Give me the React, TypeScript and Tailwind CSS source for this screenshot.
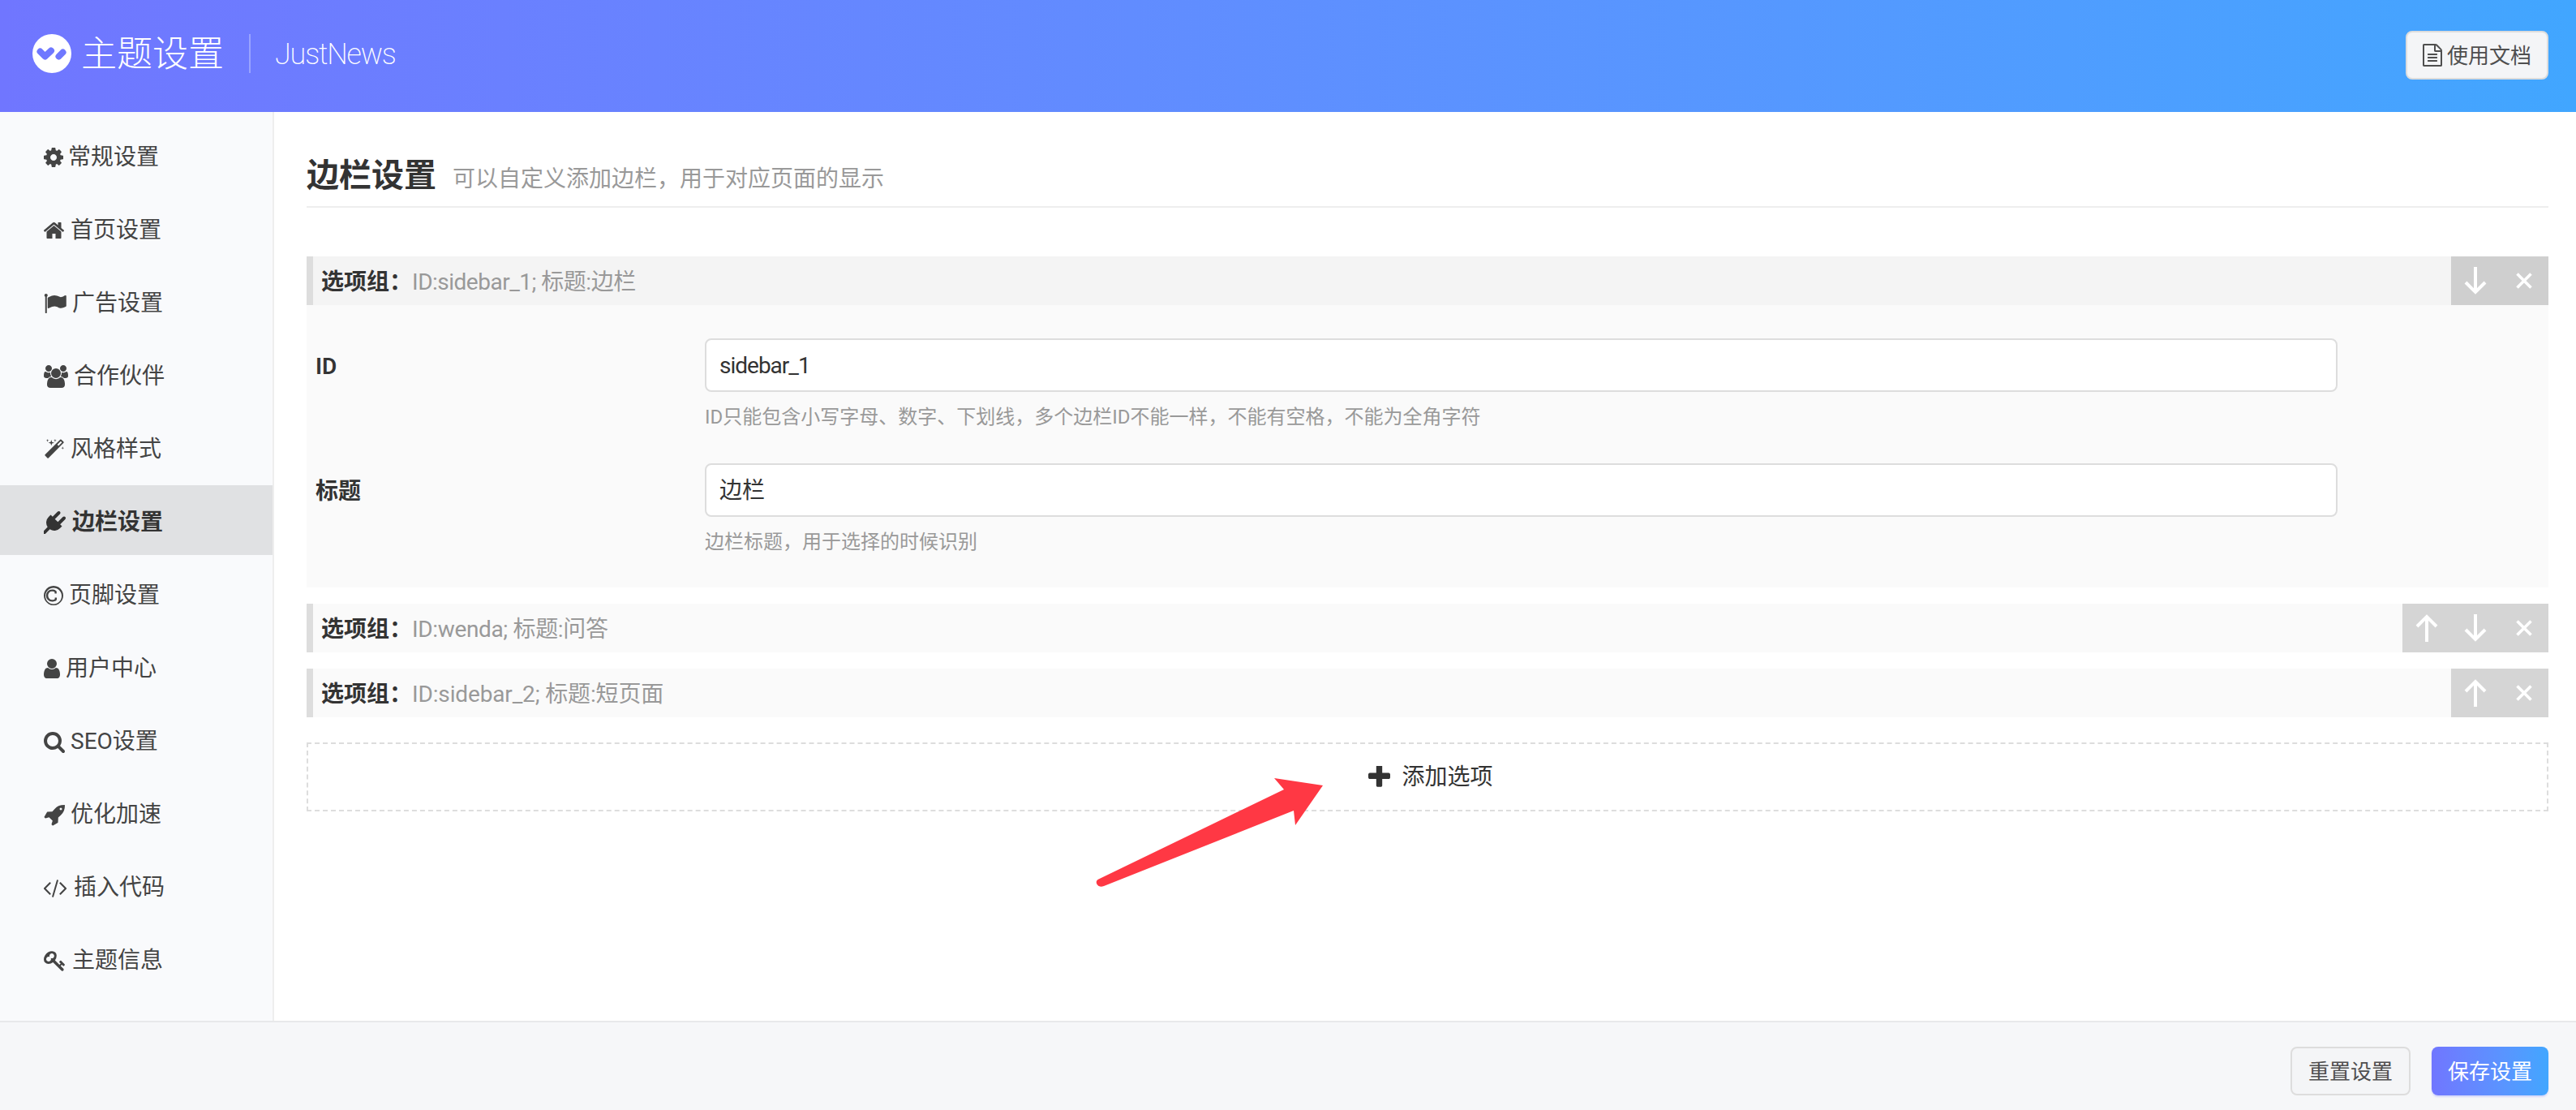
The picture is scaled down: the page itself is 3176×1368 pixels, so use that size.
import React from "react";

const FONT = "font-['Roboto','Noto_Sans_CJK_SC',sans-serif]";

type Item = { label: string; vb: string; w: string; slot: string; d: string };

const cog = "M1152 896q0-106-75-181t-181-75-181 75-75 181 75 181 181 75 181-75 75-181zm512-109v222q0 12-8 23t-20 13l-185 28q-19 54-39 91 35 50 107 138 10 12 10 25t-9 23q-27 37-99 108t-94 71q-12 0-26-9l-138-108q-44 23-91 38-16 136-29 186-7 28-36 28h-222q-14 0-24.5-8.5t-11.5-21.5l-28-184q-49-16-90-37l-141 107q-10 9-25 9-14 0-25-11-126-114-165-168-7-10-7-23 0-12 8-23 15-21 51-66.5t54-70.5q-27-50-41-99l-183-27q-13-2-21-12.5t-8-23.5v-222q0-12 8-23t19-13l186-28q14-46 39-92-40-57-107-138-10-12-10-24 0-10 9-23 26-36 98.5-107.5t94.5-71.5q13 0 26 10l138 107q44-23 91-38 16-136 29-186 7-28 36-28h222q14 0 24.5 8.5t11.5 21.5l28 184q49 16 90 37l142-107q9-9 24-9 13 0 25 10 129 119 165 170 7 8 7 22 0 12-8 23-15 21-51 66.5t-54 70.5q26 50 41 98l183 28q13 2 21 12.5t8 23.5z";
const home = "M1472 992v480q0 26-19 45t-45 19h-384v-384h-256v384h-384q-26 0-45-19t-19-45v-480q0-1 .5-3t.5-3l575-474 575 474q1 2 1 6zm223-69l-62 74q-8 9-21 11h-3q-13 0-21-7l-692-577-692 577q-12 8-24 7-13-2-21-11l-62-74q-8-10-7-23.5t11-21.5l719-599q32-26 76-26t76 26l244 204v-195q0-14 9-23t23-9h192q14 0 23 9t9 23v408l219 182q10 8 11 21.5t-7 23.5z";
const flag = "M320 256q0 72-64 110v1266q0 13-9.5 22.5t-22.5 9.5h-64q-13 0-22.5-9.5t-9.5-22.5v-1266q-64-38-64-110 0-53 37.5-90.5t90.5-37.5 90.5 37.5 37.5 90.5zm1472 64v763q0 25-12.5 38.5t-39.5 27.5q-215 116-369 116-61 0-123.5-22t-108.5-48-115.5-48-142.5-22q-192 0-464 146-17 9-33 9-26 0-45-19t-19-45v-742q0-32 31-55 21-14 79-43 236-120 421-120 107 0 200 29t219 88q38 19 88 19 54 0 117.5-21t110-47 88-47 54.5-21q26 0 45 19t19 45z";
const users = "M593 896q-162 5-265 128h-134q-82 0-138-40.5t-56-118.5q0-353 124-353 6 0 43.5 21t97.5 42.5 119 21.5q67 0 133-23-5 37-5 66 0 139 81 256zm1071 637q0 120-73 189.5t-194 69.5h-874q-121 0-194-69.5t-73-189.5q0-53 3.5-103.5t14-109 26.5-108.5 43-97.5 62-81 85.5-53.5 111.5-20q10 0 43 21.5t73 48 107 48 135 21.5 135-21.5 107-48 73-48 43-21.5q61 0 111.5 20t85.5 53.5 62 81 43 97.5 26.5 108.5 14 109 3.5 103.5zm-1024-1277q0 106-75 181t-181 75-181-75-75-181 75-181 181-75 181 75 75 181zm704 384q0 159-112.5 271.5t-271.5 112.5-271.5-112.5-112.5-271.5 112.5-271.5 271.5-112.5 271.5 112.5 112.5 271.5zm576 225q0 78-56 118.5t-138 40.5h-134q-103-123-265-128 81-117 81-256 0-29-5-66 66 23 133 23 59 0 119-21.5t97.5-42.5 43.5-21q124 0 124 353zm-128-609q0 106-75 181t-181 75-181-75-75-181 75-181 181-75 181 75 75 181z";
const magic = "M1254 581l293-293-107-107-293 293zm447-293q0 27-18 45l-1286 1286q-18 18-45 18t-45-18l-198-198q-18-18-18-45t18-45l1286-1286q18-18 45-18t45 18l198 198q18 18 18 45zm-1351-190l98 30-98 30-30 98-30-98-98-30 98-30 30-98zm350 162l196 60-196 60-60 196-60-196-196-60 196-60 60-196zm930 478l98 30-98 30-30 98-30-98-98-30 98-30 30-98zm-640-640l98 30-98 30-30 98-30-98-98-30 98-30 30-98z";
const plug = "M1755 453q37 38 37 90.5t-37 90.5l-401 400 150 150-160 160q-163 163-389.5 186.5t-411.5-100.5l-362 362h-181v-181l362-362q-124-185-100.5-411.5t186.5-389.5l160-160 150 150 400-401q38-37 91-37t90 37 37 90.5-37 90.5l-400 401 234 234 401-400q38-37 91-37t90 37z";
const copyright = "M1150 1074v109q0 50-36.5 89t-94 60.5-118 32.5-117.5 11q-205 0-342.5-139t-137.5-346q0-203 136-339t339-136q34 0 75.5 4.5t93 18 92.5 34 69 56.5 28 81v109q0 16-16 16h-118q-16 0-16-16v-70q0-43-65.5-67.5t-137.5-24.5q-140 0-228.5 91.5t-88.5 237.5q0 151 91.5 249.5t233.5 98.5q68 0 138-24t70-66v-70q0-7 4.5-11.5t10.5-4.5h119q6 0 11 4.5t5 11.5zm-254-786q-130 0-248.5 51t-204 136.5-136.5 204-51 248.5 51 248.5 136.5 204 204 136.5 248.5 51 248.5-51 204-136.5 136.5-204 51-248.5-51-248.5-136.5-204-204-136.5-248.5-51zm768 608q0 209-103 385.5t-279.5 279.5-385.5 103-385.5-103-279.5-279.5-103-385.5 103-385.5 279.5-279.5 385.5-103 385.5 103 279.5 279.5 103 385.5z";
const user = "M1536 1399q0 109-62.5 187t-150.5 78h-854q-88 0-150.5-78t-62.5-187q0-85 8.5-160.5t31.5-152 58.5-131 94-89 134.5-34.5q131 128 313 128t313-128q76 0 134.5 34.5t94 89 58.5 131 31.5 152 8.5 160.5zm-256-887q0 159-112.5 271.5t-271.5 112.5-271.5-112.5-112.5-271.5 112.5-271.5 271.5-112.5 271.5 112.5 112.5 271.5z";
const search = "M1216 832q0-185-131.5-316.5t-316.5-131.5-316.5 131.5-131.5 316.5 131.5 316.5 316.5 131.5 316.5-131.5 131.5-316.5zm512 832q0 52-38 90t-90 38q-54 0-90-38l-343-342q-179 124-399 124-143 0-273.5-55.5t-225-150-150-225-55.5-273.5 55.5-273.5 150-225 225-150 273.5-55.5 273.5 55.5 225 150 150 225 55.5 273.5q0 220-124 399l343 343q37 37 37 90z";
const rocket = "M1504 448q0-40-28-68t-68-28-68 28-28 68 28 68 68 28 68-28 28-68zm224-288q0 249-75.5 430.5t-253.5 360.5q-81 80-195 176l-20 379q-2 16-16 26l-384 224q-7 4-16 4-12 0-23-9l-64-64q-13-14-8-32l85-276-281-281-276 85q-3 1-9 1-14 0-23-9l-64-64q-17-19-5-39l224-384q10-14 26-16l379-20q96-114 176-195 188-187 358-258t431-71q14 0 24 9.5t10 22.5z";
const code = "M553 1399l-50 50q-10 10-23 10t-23-10l-466-466q-10-10-10-23t10-23l466-466q10-10 23-10t23 10l50 50q10 10 10 23t-10 23l-393 393 393 393q10 10 10 23t-10 23zm591-1067l-373 1291q-4 13-15.5 19.5t-23.5 2.5l-62-17q-13-4-19.5-15.5t-2.5-24.5l373-1291q4-13 15.5-19.5t23.5-2.5l62 17q13 4 19.5 15.5t2.5 24.5zm657 651l-466 466q-10 10-23 10t-23-10l-50-50q-10-10-10-23t10-23l393-393-393-393q-10-10-10-23t10-23l50-50q10-10 23-10t23 10l466 466q10 10 10 23t-10 23z";
const key = "M832 512q0-80-56-136t-136-56-136 56-56 136q0 42 19 83-41-19-83-19-80 0-136 56t-56 136 56 136 136 56 136-56 56-136q0-42-19-83 41 19 83 19 80 0 136-56t56-136zm851 704q0 17-49 66t-66 49q-9 0-28.5-16t-36.5-33-38.5-40-24.5-26l-96 96 220 220q28 28 28 68 0 42-39 81t-81 39q-40 0-68-28l-671-671q-176 131-365 131-163 0-265.5-102.5t-102.5-265.5q0-160 95-313t248-248 313-95q163 0 265.5 102.5t102.5 265.5q0 189-131 365l355 355 96-96q-3-3-26-24.5t-40-38.5-33-36.5-16-28.5q0-17 49-66t66-49q13 0 23 10 6 6 46 44.5t82 79.5 86.5 86 73 78 28.5 41z";
const fileText = "M1596 380q28 28 48 76t20 88v1152q0 40-28 68t-68 28h-1344q-40 0-68-28t-28-68v-1600q0-40 28-68t68-28h896q40 0 88 20t76 48zm-444-244v376h376q-10-29-22-41l-313-313q-12-12-41-22zm384 1528v-1024h-416q-40 0-68-28t-28-68v-416h-768v1536h1280zm-1024-864q0-14 9-23t23-9h704q14 0 23 9t9 23v64q0 14-9 23t-23 9h-704q-14 0-23-9t-9-23v-64zm736 224q14 0 23 9t9 23v64q0 14-9 23t-23 9h-704q-14 0-23-9t-9-23v-64q0-14 9-23t23-9h704zm0 256q14 0 23 9t9 23v64q0 14-9 23t-23 9h-704q-14 0-23-9t-9-23v-64q0-14 9-23t23-9h704z";
const plus = "M1600 736v192q0 40-28 68t-68 28h-416v416q0 40-28 68t-68 28h-192q-40 0-68-28t-28-68v-416h-416q-40 0-68-28t-28-68v-192q0-40 28-68t68-28h416v-416q0-40 28-68t68-28h192q40 0 68 28t28 68v416h416q40 0 68 28t28 68z";

const items: Item[] = [
  { label: "常规设置", vb: "128 0 1536 1792", w: "w-[24px]", slot: "w-[30px]", d: cog },
  { label: "首页设置", vb: "97 0 1600 1792", w: "w-[25px]", slot: "w-[33px]", d: home },
  { label: "广告设置", vb: "32 0 1760 1792", w: "w-[28px]", slot: "w-[35px]", d: flag },
  { label: "合作伙伴", vb: "0 0 1920 1792", w: "w-[30px]", slot: "w-[37px]", d: users },
  { label: "风格样式", vb: "0 0 1792 1792", w: "w-[26px]", slot: "w-[33px]", d: magic },
  { label: "边栏设置", vb: "64 0 1728 1792", w: "w-[27px]", slot: "w-[35px]", d: plug },
  { label: "页脚设置", vb: "128 0 1536 1792", w: "w-[24px]", slot: "w-[31px]", d: copyright },
  { label: "用户中心", vb: "256 0 1280 1792", w: "w-[20px]", slot: "w-[27px]", d: user },
  { label: "SEO设置", vb: "64 0 1664 1792", w: "w-[26px]", slot: "w-[33px]", d: search },
  { label: "优化加速", vb: "64 0 1664 1792", w: "w-[26px]", slot: "w-[33px]", d: rocket },
  { label: "插入代码", vb: "0 0 1792 1792", w: "w-[28px]", slot: "w-[37px]", d: code },
  { label: "主题信息", vb: "0 0 1683 1792", w: "w-[26px]", slot: "w-[35px]", d: key },
];

function Arrow({ up }: { up?: boolean }) {
  return (
    <svg viewBox="0 0 28 34" className="w-[28px] h-[34px]" fill="none" stroke="#fff" strokeWidth="4">
      {up ? <path d="M14 34V3M2 15L14 3l12 12" /> : <path d="M14 0v31M2 19l12 12 12-12" />}
    </svg>
  );
}

function Close() {
  return (
    <svg viewBox="0 0 20 20" className="w-[20px] h-[20px]" fill="none" stroke="#fff" strokeWidth="3.6">
      <path d="M1.500 1.500l17 17M18.500 1.500l-17 17" />
    </svg>
  );
}

function ActionButton({ children }: { children: React.ReactNode }) {
  return <div className="w-[60px] h-[60px] flex items-center justify-center">{children}</div>;
}

function GroupHeader({ text, track, up, down, open }: { text: string; track: string; up?: boolean; down?: boolean; open?: boolean }) {
  return (
    <div className={`h-[60px] flex items-center border-l-[8px] border-[#dddddd] ${open ? "bg-[#f4f4f4]" : "bg-[#fafafa]"}`}>
      <span className="ml-[10px] pt-[4px] font-semibold text-[#333]">选项组：</span>
      <span className={`flex-1 pt-[4px] text-[#999] ${track}`}>{text}</span>
      <div className={`flex ${open ? "bg-[#cfcfcf]" : "bg-[#d5d5d5]"}`}>
        {up && <ActionButton><Arrow up /></ActionButton>}
        {down && <ActionButton><Arrow /></ActionButton>}
        <ActionButton><Close /></ActionButton>
      </div>
    </div>
  );
}

function Field({ label, value, help, latin }: { label: string; value: string; help: string; latin?: boolean }) {
  return (
    <div className="flex h-[154px]">
      <div className="w-[491px] pl-[11px] pt-[10px] leading-[50px] font-semibold text-[#333]">{label}</div>
      <div className="w-[2013px]">
        <div className={`h-[66px] rounded-[8px] border-2 border-[#dddddd] bg-white pl-[16px] pt-[2px] leading-[60px] text-[#333] ${latin ? "tracking-[-1px]" : ""}`}>{value}</div>
        <div className="mt-[15px] text-[24px] leading-[32px] text-[#999]">{help}</div>
      </div>
    </div>
  );
}

export default function App() {
  return (
    <div className={`relative w-[3176px] h-[1368px] overflow-hidden bg-white text-[28px] text-[#444] ${FONT}`}>
      <header className="h-[138px] flex items-center justify-between pl-[40px] pr-[34px] bg-gradient-to-r from-[#7076ff] to-[#41a6ff]">
        <div className="flex items-center text-white mb-[6px]">
          <svg viewBox="0 0 48 48" className="w-[48px] h-[48px]">
            <circle cx="24" cy="24" r="24" fill="#fff" />
            <path d="M9.500 21.500L15.500 27.500L23 20.500" fill="none" stroke="#6f78ff" strokeWidth="8" strokeLinecap="round" strokeLinejoin="round" />
            <path d="M32.500 27.500L37.500 22.500" fill="none" stroke="#6f78ff" strokeWidth="8" strokeLinecap="round" />
          </svg>
          <span className="ml-[12px] pt-[2px] text-[44px] leading-[60px] font-light">主题设置</span>
          <span className="ml-[31px] h-[48px] w-[2px] bg-white/30" />
          <span className="ml-[30px] pt-[2px] text-[36px] leading-[60px] font-extralight tracking-[-1.2px] font-['Roboto']">JustNews</span>
        </div>
        <div className="w-[176px] h-[60px] mb-[2px] flex items-center pl-[19px] rounded-[8px] border-2 border-[#dddddd] bg-[#f4f5f7] text-[26px] text-[#4f4f4f]">
          <svg viewBox="128 0 1536 1792" className="w-[24px] h-[28px] fill-current">
            <path d={fileText} />
          </svg>
          <span className="ml-[6px] pt-[2px]">使用文档</span>
        </div>
      </header>

      <div className="flex h-[1120px]">
        <aside className="w-[338px] border-r-2 border-[#eeeeee] bg-[#f9fafc] pt-[10px] flex flex-col gap-[4px]">
          {items.map((it) => {
            const active = it.label === "边栏设置";
            return (
              <div key={it.label} className={`h-[86px] pt-[5px] flex items-center pl-[54px] ${active ? "bg-[#e0e1e3] font-semibold text-[#333]" : ""}`}>
                <span className={`${it.slot} flex items-center`}>
                  <svg viewBox={it.vb} className={`${it.w} h-[28px] fill-current`}>
                    <path d={it.d} />
                  </svg>
                </span>
                <span>{it.label}</span>
              </div>
            );
          })}
        </aside>

        <main className="w-[2804px] pl-[40px]">
          <div className="h-[118px] pt-[54px] border-b-2 border-[#eeeeee] flex items-baseline">
            <span className="text-[40px] leading-[50px] font-semibold text-[#333]">边栏设置</span>
            <span className="ml-[20px] text-[#999]">可以自定义添加边栏，用于对应页面的显示</span>
          </div>

          <div className="mt-[60px] flex flex-col">
            <GroupHeader open down track="tracking-[-0.5px]" text="ID:sidebar_1; 标题:边栏" />
            <div className="h-[348px] bg-[#fafafa] pt-[41px]">
              <Field latin label="ID" value="sidebar_1" help="ID只能包含小写字母、数字、下划线，多个边栏ID不能一样，不能有空格，不能为全角字符" />
              <Field label="标题" value="边栏" help="边栏标题，用于选择的时候识别" />
            </div>
            <div className="mt-[20px]">
              <GroupHeader up down track="tracking-[-0.35px]" text="ID:wenda; 标题:问答" />
            </div>
            <div className="mt-[20px]">
              <GroupHeader up track="tracking-[-0.15px]" text="ID:sidebar_2; 标题:短页面" />
            </div>
            <div className="mt-[31px] h-[85px] pl-[8px] border-2 border-dashed border-[#dddddd] flex items-center justify-center text-[#333]">
              <svg viewBox="192 192 1408 1408" className="w-[27px] h-[27px] fill-current">
                <path d={plus} />
              </svg>
              <span className="ml-[14px]">添加选项</span>
            </div>
          </div>
        </main>
      </div>

      <footer className="h-[110px] border-t-2 border-[#e8e9eb] bg-[#f6f7f9] flex items-start justify-end pt-[30px] pr-[34px] gap-[26px]">
        <div className="w-[148px] h-[60px] pt-[2px] flex items-center justify-center rounded-[8px] border-2 border-[#dddddd] bg-[#f4f5f7] text-[26px] text-[#4f4f4f]">重置设置</div>
        <div className="w-[144px] h-[60px] pt-[2px] flex items-center justify-center rounded-[8px] bg-gradient-to-r from-[#7076ff] to-[#41a6ff] text-[26px] text-white shadow-[0_2px_2px_rgba(110,120,255,0.25)]">保存设置</div>
      </footer>

      <svg viewBox="0 0 3176 1368" className="absolute left-0 top-0 w-[3176px] h-[1368px] pointer-events-none">
        <path d="M1353.500 1084 L1583 973 L1571 959 L1631 968 L1597 1017 L1595 999 L1361 1092 Q1355 1094 1352.500 1090 Q1350.500 1086 1353.500 1084 Z" fill="#ff3844" />
      </svg>
    </div>
  );
}
